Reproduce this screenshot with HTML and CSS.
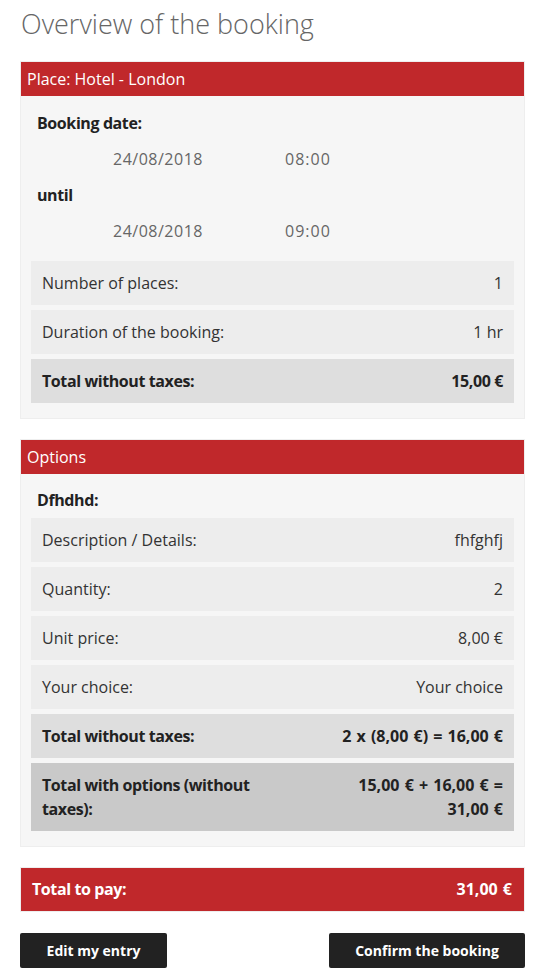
FILE: index.html
```html
<!DOCTYPE html>
<html lang="en">
<head>
<meta charset="utf-8">
<title>Overview of the booking</title>
<link rel="stylesheet" href="styles.css">
</head>
<body>
<main class="page">
  <h1 class="title">Overview of the booking</h1>

  <section class="panel">
    <header class="panel-head">Place: Hotel - London</header>
    <div class="panel-body">
      <div class="label">Booking date:</div>
      <div class="when"><span class="date">24/08/2018</span><span class="time">08:00</span></div>
      <div class="label">until</div>
      <div class="when"><span class="date">24/08/2018</span><span class="time">09:00</span></div>
      <div class="rows first-rows">
        <div class="row"><span>Number of places:</span><span>1</span></div>
        <div class="row"><span>Duration of the booking:</span><span>1 hr</span></div>
        <div class="row total"><span>Total without taxes:</span><span>15,00 €</span></div>
      </div>
    </div>
  </section>

  <section class="panel panel-options">
    <header class="panel-head">Options</header>
    <div class="panel-body">
      <div class="label">Dfhdhd:</div>
      <div class="rows">
        <div class="row"><span>Description / Details:</span><span>fhfghfj</span></div>
        <div class="row"><span>Quantity:</span><span>2</span></div>
        <div class="row"><span>Unit price:</span><span>8,00 €</span></div>
        <div class="row"><span>Your choice:</span><span>Your choice</span></div>
        <div class="row total"><span>Total without taxes:</span><span class="wide">2 x (8,00 €) = 16,00 €</span></div>
        <div class="row grand"><span class="grand-label">Total with options (without taxes):</span><span class="grand-value wide">15,00 € + 16,00 € = 31,00 €</span></div>
      </div>
    </div>
  </section>

  <div class="pay"><span>Total to pay:</span><span class="wide">31,00 €</span></div>

  <div class="actions">
    <button class="btn btn-edit" type="button">Edit my entry</button>
    <button class="btn btn-confirm" type="button">Confirm the booking</button>
  </div>
</main>
</body>
</html>
```

FILE: styles.css
```css
* { box-sizing: border-box; }

body {
  margin: 0;
  background: #fff;
  font-family: "Open Sans", "Liberation Sans", sans-serif;
  font-size: 16px;
  color: #333;
}

.page {
  width: 505px;
  margin-left: 20px;
  padding-top: 4px;
}

.title {
  margin: 0 0 17px 1px;
  font-size: 27px;
  font-weight: 300;
  line-height: 40px;
  color: #666;
}

.panel {
  border: 1px solid #eee;
  background: #f6f6f6;
  margin-bottom: 20px;
}

.panel-head {
  background: #c0282b;
  color: #fff;
  height: 34px;
  line-height: 34px;
  padding: 0 6px;
  font-size: 16px;
}

.panel-body {
  padding: 9px 10px 15px;
}

.panel-options .panel-body {
  padding-top: 8px;
  padding-bottom: 15px;
}

.label {
  padding-left: 6px;
  line-height: 36px;
  font-weight: 700;
  letter-spacing: -0.4px;
  color: #222;
}

.when {
  display: flex;
  line-height: 36px;
  color: #666;
  padding-left: 82px;
  letter-spacing: 0.5px;
}

.date { width: 172px; }
.time { letter-spacing: 1px; }

.first-rows { margin-top: 12px; }

.rows {
  display: flex;
  flex-direction: column;
  gap: 5px;
}

.row {
  display: flex;
  justify-content: space-between;
  gap: 20px;
  background: #ededed;
  padding: 10px 11px;
  line-height: 24px;
}

.row.total,
.row.grand {
  font-weight: 700;
  letter-spacing: -0.4px;
  color: #222;
}

.row.total { background: #dedede; }
.row.grand { background: #c9c9c9; }

.wide { word-spacing: 1px; letter-spacing: 0; }

.grand-label { width: 230px; }
.grand-value { width: 180px; text-align: right; }

.pay {
  display: flex;
  justify-content: space-between;
  background: #c0282b;
  border: 1px solid #eee;
  color: #fff;
  font-weight: 700;
  letter-spacing: -0.4px;
  height: 45px;
  line-height: 43px;
  padding: 0 12px 0 11px;
}

.actions {
  display: flex;
  justify-content: space-between;
  margin-top: 21px;
}

.btn {
  height: 35px;
  border: 0;
  border-radius: 2px;
  background: #222;
  color: #fff;
  font-family: inherit;
  font-size: 14px;
  font-weight: 700;
  cursor: pointer;
}

.btn-edit { width: 147px; }
.btn-confirm { width: 196px; }
```
